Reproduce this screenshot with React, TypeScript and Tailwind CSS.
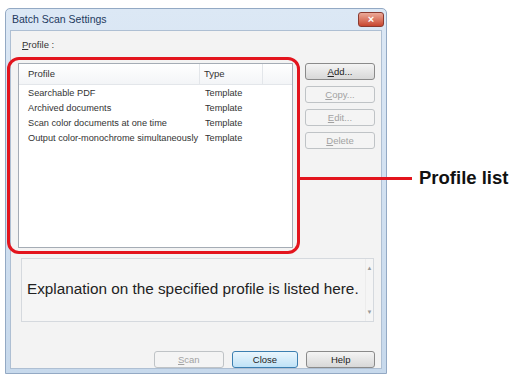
import React from 'react';

const rows = [
    { name: 'Searchable PDF', type: 'Template' },
    { name: 'Archived documents', type: 'Template' },
    { name: 'Scan color documents at one time', type: 'Template' },
    { name: 'Output color-monochrome simultaneously', type: 'Template' },
];

const DlgButton = ({
    label,
    u,
    disabled,
    primary,
    className = '',
}: {
    label: string;
    u?: boolean;
    disabled?: boolean;
    primary?: boolean;
    className?: string;
}) => {
    const base = 'h-[17px] flex items-center justify-center rounded-[3px] border text-[9.5px] leading-none';
    const look = disabled
        ? 'border-[#bfc3c6] bg-[#f4f4f4] text-[#a2a2a2]'
        : primary
        ? 'border-[#3c7fb1] bg-gradient-to-b from-[#eaf6fd] to-[#bfe2f7] text-[#222]'
        : 'border-[#8a8a8a] bg-gradient-to-b from-[#f4f4f4] to-[#d8d8d8] text-[#222]';
    return (
        <div className={`${base} ${look} ${className}`}>
            {u ? (
                <>
                    <span className="underline">{label[0]}</span>
                    {label.slice(1)}
                </>
            ) : (
                label
            )}
        </div>
    );
};

export default function App() {
    return (
        <div className="relative w-[512px] h-[384px] overflow-hidden bg-white font-['Liberation_Sans',Arial,sans-serif]">
            {/* dialog window */}
            <div className="ml-[5px] mt-[8px] w-[382px] h-[366px] flex flex-col rounded-t-[5px] border border-[#93a9c4] bg-gradient-to-b from-[#dce8f5] to-[#c7d9ec]">
                <div className="h-[21px] flex items-center justify-between pl-[6px] pr-[2px]">
                    <span className="text-[10.5px] text-[#1e3a5f]">Batch Scan Settings</span>
                    <div className="w-[26px] h-[15px] rounded-[3px] border border-[#8a3a30] bg-gradient-to-b from-[#eba999] to-[#c7442e] flex items-center justify-center text-white text-[11px] font-bold leading-none">
                        ×
                    </div>
                </div>
                <div className="flex-1 mx-[4px] mb-[4px] border border-[#aebfd3] bg-[#f3f3f3] flex flex-col px-[6px]">
                    <div className="mt-[8px] ml-[5px] h-[12px] text-[9.5px] text-[#333] leading-[12px]">
                        <span className="underline">P</span>rofile :
                    </div>
                    <div className="mt-[12px] flex">
                        {/* list box */}
                        <div className="ml-[1px] w-[276px] h-[185px] border border-[#a5acb5] bg-white flex flex-col">
                            <div className="h-[21px] flex items-center border-b border-[#e3e6ea] bg-gradient-to-b from-white to-[#f3f5f7] text-[9.5px] text-[#333]">
                                <div className="w-[181px] pl-[9px] border-r border-[#e3e6ea] h-full flex items-center">Profile</div>
                                <div className="w-[63px] pl-[4px] border-r border-[#e3e6ea] h-full flex items-center">Type</div>
                            </div>
                            <div className="pt-[1px]">
                                {rows.map((r) => (
                                    <div key={r.name} className="h-[15px] flex items-center text-[9.2px] text-[#333] whitespace-nowrap">
                                        <div className="w-[182px] pl-[9px]">{r.name}</div>
                                        <div className="pl-[4px]">{r.type}</div>
                                    </div>
                                ))}
                            </div>
                        </div>
                        {/* side buttons */}
                        <div className="ml-[12px] flex flex-col gap-[6px]">
                            <DlgButton label="Add..." u className="w-[70px]" />
                            <DlgButton label="Copy..." u disabled className="w-[70px]" />
                            <DlgButton label="Edit..." u disabled className="w-[70px]" />
                            <DlgButton label="Delete" u disabled className="w-[70px]" />
                        </div>
                    </div>
                    {/* explanation */}
                    <div className="mt-[10px] ml-[4px] w-[353px] h-[64px] border border-[#d5d9de] bg-[#f5f5f5] flex">
                        <div className="flex-1 pl-[5px] pt-[22px] text-[15.3px] text-[#222] leading-none whitespace-nowrap">
                            Explanation on the specified profile is listed here.
                        </div>
                        <div className="w-[8px] flex flex-col justify-between items-center py-[6px] border-l border-[#ececec] text-[6px] text-[#999] leading-none">
                            <span>▲</span>
                            <span>▼</span>
                        </div>
                    </div>
                    {/* bottom buttons */}
                    <div className="mt-[29px] flex gap-[8px] pl-[137px]">
                        <DlgButton label="Scan" u disabled className="w-[70px] h-[17px]" />
                        <DlgButton label="Close" primary className="w-[67px]" />
                        <DlgButton label="Help" className="w-[69px]" />
                    </div>
                </div>
            </div>

            {/* annotation */}
            <div className="absolute left-[7px] top-[57px] w-[293px] h-[197px] rounded-[12px] border-[3px] border-[#e3141d]" />
            <div className="absolute left-[299px] top-[177px] w-[113px] h-[3px] bg-[#e3141d]" />
            <div className="absolute left-[419px] top-[168px] text-[18.5px] font-bold text-[#111] leading-[20px] whitespace-nowrap">
                Profile list
            </div>
        </div>
    );
}
